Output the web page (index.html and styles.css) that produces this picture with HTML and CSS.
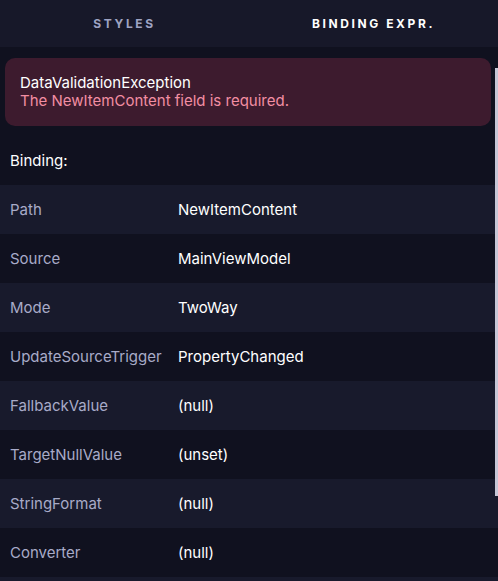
FILE: index.html
```html
<!DOCTYPE html>
<html>
<head>
<meta charset="utf-8">
<link rel="stylesheet" href="styles.css">
</head>
<body>
<div class="tabs">
  <div class="tab">STYLES</div>
  <div class="tab active">BINDING EXPR.</div>
</div>
<div class="panel">
  <div class="error">
    <div class="err-title">DataValidationException</div>
    <div class="err-msg">The NewItemContent field is required.</div>
  </div>
  <div class="section">Binding:</div>
  <div class="rows">
    <div class="row"><span class="label">Path</span><span class="value">NewItemContent</span></div>
    <div class="row"><span class="label">Source</span><span class="value">MainViewModel</span></div>
    <div class="row"><span class="label">Mode</span><span class="value">TwoWay</span></div>
    <div class="row"><span class="label">UpdateSourceTrigger</span><span class="value">PropertyChanged</span></div>
    <div class="row"><span class="label">FallbackValue</span><span class="value">(null)</span></div>
    <div class="row"><span class="label">TargetNullValue</span><span class="value">(unset)</span></div>
    <div class="row"><span class="label">StringFormat</span><span class="value">(null)</span></div>
    <div class="row"><span class="label">Converter</span><span class="value">(null)</span></div>
    <div class="row"></div>
  </div>
  <div class="thumb"></div>
</div>
</body>
</html>
```
FILE: styles.css
```css
html, body {
  margin: 0;
  padding: 0;
  background: #10111f;
  font-family: Inter, "Noto Sans", sans-serif;
  font-size: 15px;
  color: #ffffff;
  overflow: hidden;
}
.tabs {
  display: flex;
  height: 47px;
  background: #171829;
}
.tab {
  flex: 1;
  display: flex;
  align-items: center;
  justify-content: center;
  font-size: 12px;
  font-weight: 700;
  letter-spacing: 2.6px;
  color: #9ea3c2;
}
.tab.active {
  color: #ffffff;
}
.panel {
  position: relative;
  height: 534px;
  overflow: hidden;
}
.error {
  margin: 11px 7px 0 5px;
  padding: 16px 15px;
  background: #3d1b2e;
  border-radius: 10px;
  line-height: 18px;
}
.err-title {
  color: #ffffff;
}
.err-msg {
  color: #f28ea3;
}
.section {
  margin-top: 10px;
  height: 49px;
  display: flex;
  align-items: center;
  padding-left: 10px;
  color: #ffffff;
}
.row {
  display: flex;
  align-items: center;
  height: 49px;
}
.row:nth-child(odd) {
  background: #181a2c;
}
.label {
  width: 178px;
  padding-left: 10px;
  box-sizing: border-box;
  color: #a8abc8;
}
.value {
  color: #ffffff;
}
.thumb {
  position: absolute;
  right: 0;
  top: 21px;
  width: 3px;
  height: 428px;
  background: #c6c6d6;
}
```
